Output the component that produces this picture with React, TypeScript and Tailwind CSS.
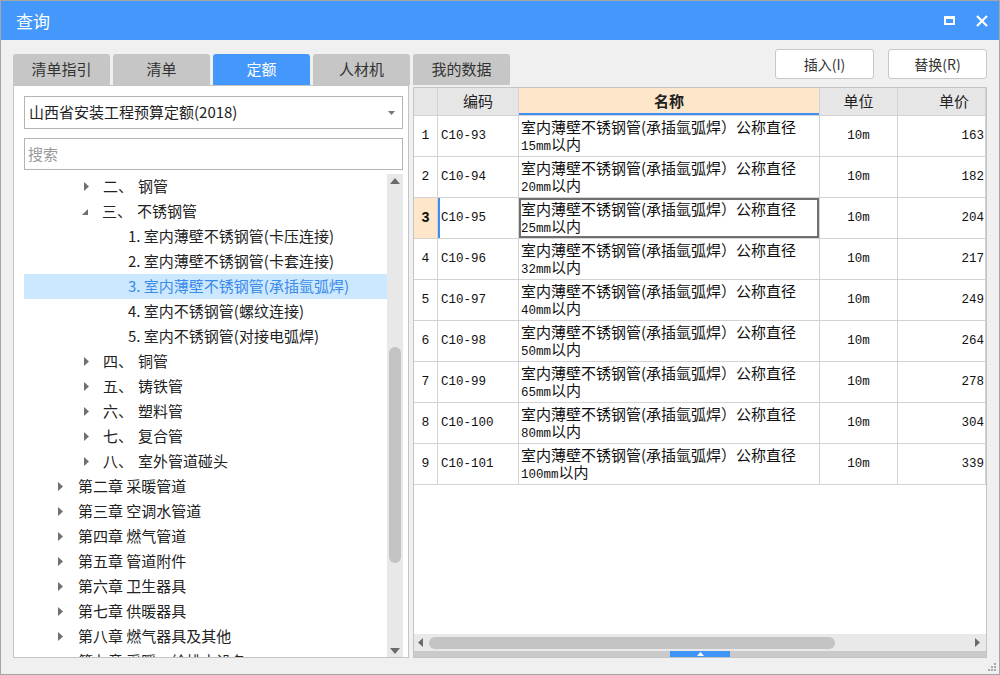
import React from 'react';

type TreeRow = {
  level: 'chapter' | 'section' | 'leaf';
  label?: string;
  text: string;
  open?: boolean;
  selected?: boolean;
};

const treeRows: TreeRow[] = [
  { level: 'section', label: '二、', text: '钢管' },
  { level: 'section', label: '三、', text: '不锈钢管', open: true },
  { level: 'leaf', text: '1. 室内薄壁不锈钢管(卡压连接)' },
  { level: 'leaf', text: '2. 室内薄壁不锈钢管(卡套连接)' },
  { level: 'leaf', text: '3. 室内薄壁不锈钢管(承插氩弧焊)', selected: true },
  { level: 'leaf', text: '4. 室内不锈钢管(螺纹连接)' },
  { level: 'leaf', text: '5. 室内不锈钢管(对接电弧焊)' },
  { level: 'section', label: '四、', text: '铜管' },
  { level: 'section', label: '五、', text: '铸铁管' },
  { level: 'section', label: '六、', text: '塑料管' },
  { level: 'section', label: '七、', text: '复合管' },
  { level: 'section', label: '八、', text: '室外管道碰头' },
  { level: 'chapter', text: '第二章 采暖管道' },
  { level: 'chapter', text: '第三章 空调水管道' },
  { level: 'chapter', text: '第四章 燃气管道' },
  { level: 'chapter', text: '第五章 管道附件' },
  { level: 'chapter', text: '第六章 卫生器具' },
  { level: 'chapter', text: '第七章 供暖器具' },
  { level: 'chapter', text: '第八章 燃气器具及其他' },
  { level: 'chapter', text: '第九章 采暖、给排水设备' },
];

const quotaRows = [
  { code: 'C10-93', size: '15mm', price: '163' },
  { code: 'C10-94', size: '20mm', price: '182' },
  { code: 'C10-95', size: '25mm', price: '204' },
  { code: 'C10-96', size: '32mm', price: '217' },
  { code: 'C10-97', size: '40mm', price: '249' },
  { code: 'C10-98', size: '50mm', price: '264' },
  { code: 'C10-99', size: '65mm', price: '278' },
  { code: 'C10-100', size: '80mm', price: '304' },
  { code: 'C10-101', size: '100mm', price: '339' },
];

const tabs = ['清单指引', '清单', '定额', '人材机', '我的数据'];

function ArrowRight() {
  return (
    <svg width="5" height="9" viewBox="0 0 5 9" className="shrink-0">
      <path d="M0 0 L5 4.5 L0 9 Z" fill="#707070" />
    </svg>
  );
}

function ArrowOpen() {
  return (
    <svg width="6" height="6" viewBox="0 0 6 6" className="shrink-0">
      <path d="M6 0 L6 6 L0 6 Z" fill="#707070" />
    </svg>
  );
}

function Tree() {
  return (
    <div className="flex-1 min-h-0 flex overflow-hidden">
      <div className="w-[363px] overflow-hidden">
        {treeRows.map((r, i) => (
          <div
            key={i}
            className={`h-[25px] flex items-center whitespace-nowrap text-[15px] ${
              r.selected ? 'bg-[#cce8ff] text-[#3b8be8]' : 'text-[#222]'
            }`}
          >
            {r.level === 'chapter' && (
              <>
                <span className="w-[34px] shrink-0" />
                <ArrowRight />
                <span className="ml-[15px]">{r.text}</span>
              </>
            )}
            {r.level === 'section' && (
              <>
                <span className={r.open ? 'w-[58px] shrink-0' : 'w-[60px] shrink-0'} />
                {r.open ? <ArrowOpen /> : <ArrowRight />}
                <span className="ml-[14px] w-[35px] shrink-0">{r.label}</span>
                <span>{r.text}</span>
              </>
            )}
            {r.level === 'leaf' && <span className="pl-[104px]">{r.text}</span>}
          </div>
        ))}
      </div>
      <div className="w-[16px] bg-[#e8e8e8] flex flex-col items-center">
        <svg width="10" height="6" viewBox="0 0 10 6" className="mt-[4px] shrink-0">
          <path d="M0 6 L5 0 L10 6 Z" fill="#6b6b6b" />
        </svg>
        <div className="mt-[163px] w-[12px] h-[216px] shrink-0 rounded-full bg-[#c3c3c3]" />
        <div className="flex-1" />
        <svg width="10" height="6" viewBox="0 0 10 6" className="mb-[3px] shrink-0">
          <path d="M0 0 L10 0 L5 6 Z" fill="#6b6b6b" />
        </svg>
      </div>
    </div>
  );
}

function LeftPanel() {
  return (
    <div className="w-[396px] min-h-0 bg-white border border-[#c4c4c4] flex flex-col pl-[10px] pr-[5px] pt-[10px]">
      <div className="h-[33px] shrink-0 border border-[#b4b4b4] flex items-center pl-[4px] pr-[7px] text-[15px] text-[#222]">
        <span className="flex-1">山西省安装工程预算定额(2018)</span>
        <svg width="7" height="4" viewBox="0 0 7 4">
          <path d="M0 0 L7 0 L3.5 4 Z" fill="#777" />
        </svg>
      </div>
      <div className="mt-[9px] h-[32px] shrink-0 border border-[#b4b4b4] flex items-center pl-[3px] text-[15px] text-[#9a9a9a]">
        搜索
      </div>
      <div className="mt-[4px] flex-1 min-h-0 flex">
        <Tree />
      </div>
    </div>
  );
}

function QuotaTable() {
  const cell = 'border-r border-b border-[#d3d3d3]';
  const mono = "font-['Liberation_Mono',monospace]";
  return (
    <div className="ml-[4px] mt-[2px] flex-1 min-h-0 bg-white border border-[#c4c4c4] flex flex-col overflow-hidden">
      <div className="h-[28px] shrink-0 grid grid-cols-[24px_81px_301px_78px_1fr] text-[15px] text-[#222]">
        <div className={`${cell} bg-[#e6e6e6]`} />
        <div className={`${cell} bg-[#e6e6e6] flex items-center justify-center`}>编码</div>
        <div className={`${cell} bg-[#fde6c9] flex items-center justify-center font-bold shadow-[inset_0_-2px_0_#3d8ff5]`}>名称</div>
        <div className={`${cell} bg-[#e6e6e6] flex items-center justify-center`}>单位</div>
        <div className={`${cell} bg-[#e6e6e6] flex items-center pl-[41px]`}>单价</div>
      </div>
      {quotaRows.map((r, i) => {
        const active = i === 2;
        return (
          <div key={r.code} className="h-[41px] shrink-0 grid grid-cols-[24px_81px_301px_78px_1fr] text-[#111]">
            <div
              className={`${cell} ${mono} flex items-center justify-center text-[13px] ${
                active ? 'bg-[#fde6c9] font-bold text-[14px]' : ''
              }`}
            >
              {i + 1}
            </div>
            <div
              className={`${cell} ${mono} flex items-center pl-[3px] text-[12.5px] ${
                active ? 'shadow-[inset_2px_0_0_#3d8ff5]' : ''
              }`}
            >
              {r.code}
            </div>
            <div
              className={`${cell} flex flex-col justify-center pl-[2px] pt-[1px] text-[15px] leading-[17px] whitespace-nowrap ${
                active ? 'shadow-[inset_0_0_0_2px_#707070]' : ''
              }`}
            >
              <div>室内薄壁不锈钢管(承插氩弧焊）公称直径</div>
              <div>
                <span className={`${mono} text-[12.5px]`}>{r.size}</span>以内
              </div>
            </div>
            <div className={`${cell} ${mono} flex items-center justify-center text-[12.5px]`}>10m</div>
            <div className={`${cell} ${mono} flex items-center justify-end pr-[1px] text-[12.5px]`}>{r.price}</div>
          </div>
        );
      })}
      <div className="flex-1 min-h-0" />
      <div className="h-[17px] shrink-0 bg-[#e9e9e9] flex items-center px-[4px]">
        <svg width="5" height="9" viewBox="0 0 5 9">
          <path d="M5 0 L0 4.5 L5 9 Z" fill="#6b6b6b" />
        </svg>
        <div className="ml-[6px] w-[406px] h-[12px] rounded-full bg-[#c4c4c4]" />
        <div className="flex-1" />
        <svg width="5" height="9" viewBox="0 0 5 9" className="mr-[2px]">
          <path d="M0 0 L5 4.5 L0 9 Z" fill="#6b6b6b" />
        </svg>
      </div>
      <div className="h-[6px] shrink-0 bg-[#cacaca] flex justify-center">
        <div className="w-[60px] h-[6px] bg-[#3f95f5] flex items-center justify-center">
          <svg width="7" height="4" viewBox="0 0 7 4">
            <path d="M0 4 L3.5 0 L7 4 Z" fill="#fff" />
          </svg>
        </div>
      </div>
    </div>
  );
}

export default function App() {
  return (
    <div className="w-[1000px] h-[675px] flex flex-col border border-[#a6a6a6] font-['Noto_Sans_CJK_SC',sans-serif] overflow-hidden">
      <div className="h-[39px] shrink-0 bg-[#4598fb] flex items-center pl-[15px] pr-[11px] text-white">
        <span className="text-[17px]">查询</span>
        <div className="flex-1" />
        <div className="w-[11px] h-[9px] border-2 border-t-[3px] border-white" />
        <svg width="12" height="12" viewBox="0 0 12 12" className="ml-[21px]">
          <path d="M1 1 L11 11 M11 1 L1 11" stroke="#fff" strokeWidth="2.2" />
        </svg>
      </div>
      <div className="flex-1 min-h-0 flex flex-col bg-[#f0f0f0] px-[12px] pb-[16px] relative">
        <div className="h-[45px] shrink-0 flex">
          <div className="mt-[14px] flex gap-[3px]">
            {tabs.map((t) => (
              <div
                key={t}
                className={`w-[97px] h-[31px] rounded-t-[3px] flex items-center justify-center text-[15px] ${
                  t === '定额' ? 'bg-[#4598fb] text-white' : 'bg-[#c6c6c6] text-[#333]'
                }`}
              >
                {t}
              </div>
            ))}
          </div>
          <div className="flex-1" />
          <div className="mt-[9px] flex gap-[14px]">
            <button className="w-[99px] h-[30px] bg-white border border-[#c8c8c8] rounded-[3px] text-[14px] text-[#333]">
              插入(I)
            </button>
            <button className="w-[99px] h-[30px] bg-white border border-[#c8c8c8] rounded-[3px] text-[14px] text-[#333]">
              替换(R)
            </button>
          </div>
        </div>
        <div className="flex-1 min-h-0 flex">
          <LeftPanel />
          <QuotaTable />
        </div>
        <svg width="10" height="10" viewBox="0 0 10 10" className="absolute right-[2px] bottom-[2px]">
          <rect x="7" y="1" width="2" height="2" fill="#a8a8a8" />
          <rect x="4" y="4" width="2" height="2" fill="#a8a8a8" />
          <rect x="7" y="4" width="2" height="2" fill="#a8a8a8" />
          <rect x="1" y="7" width="2" height="2" fill="#a8a8a8" />
          <rect x="4" y="7" width="2" height="2" fill="#a8a8a8" />
          <rect x="7" y="7" width="2" height="2" fill="#a8a8a8" />
        </svg>
      </div>
    </div>
  );
}
